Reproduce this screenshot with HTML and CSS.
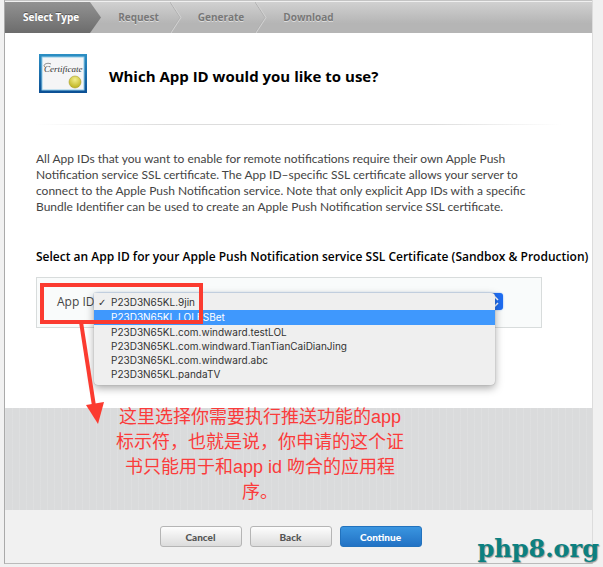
FILE: index.html
```html
<!DOCTYPE html>
<html lang="en">
<head>
<meta charset="UTF-8" />
<meta name="viewport" content="width=device-width, initial-scale=1" />
<title>Add iOS Certificate</title>
<link rel="stylesheet" href="styles.css">
</head>
<body>
<div class="panel">
  <ol class="steps">
    <li class="step active">Select Type
      <svg class="step-arrow" width="12" height="31" viewBox="0 0 12 31">
        <defs>
          <linearGradient id="activeFill" x1="0" y1="0" x2="0" y2="1">
            <stop offset="0" stop-color="#929292" />
            <stop offset="1" stop-color="#6c6c6c" />
          </linearGradient>
        </defs>
        <path d="M0 0L11 15.500L0 31Z" fill="url(#activeFill)" />
      </svg>
    </li>
    <li class="step">Request
      <svg class="step-arrow" width="12" height="31" viewBox="0 0 12 31">
        <path d="M0 0L10 15.500L0 31" fill="none" stroke="#b0b0b0" />
        <path d="M1 0L11 15.500L1 31" fill="none" stroke="#d2d2d2" />
      </svg>
    </li>
    <li class="step">Generate
      <svg class="step-arrow" width="12" height="31" viewBox="0 0 12 31">
        <path d="M0 0L10 15.500L0 31" fill="none" stroke="#b0b0b0" />
        <path d="M1 0L11 15.500L1 31" fill="none" stroke="#d2d2d2" />
      </svg>
    </li>
    <li class="step">Download</li>
  </ol>

  <form class="content">
    <div class="title">
      <svg class="certificate" width="48" height="40" viewBox="0 0 48 40">
        <defs>
          <linearGradient id="frame" x1="0" y1="0" x2="0" y2="1">
            <stop offset="0" stop-color="#2c8fc4" />
            <stop offset="1" stop-color="#0b4f94" />
          </linearGradient>
          <radialGradient id="seal" cx="0.5" cy="0.3" r="0.7">
            <stop offset="0" stop-color="#f3ee8c" />
            <stop offset="1" stop-color="#bdb21c" />
          </radialGradient>
        </defs>
        <rect x="0" y="0" width="48" height="39" fill="url(#frame)" />
        <rect x="3" y="3" width="42" height="33" fill="#f5f5f6" stroke="#8fcbe8" />
        <path d="M12 10C8 8 3 11 6 13" fill="none" stroke="#555" stroke-width="0.7" />
        <text class="certificate-text" x="5" y="18">Certificate</text>
        <circle cx="36" cy="28" r="6" fill="url(#seal)" stroke="#aaa030" stroke-width="0.6" />
      </svg>
      <h1>Which App ID would you like to use?</h1>
    </div>

    <p class="intro">
      All App IDs that you want to enable for remote notifications require their own Apple Push<br>
      Notification service SSL certificate. The App ID–specific SSL certificate allows your server to<br>
      connect to the Apple Push Notification service. Note that only explicit App IDs with a specific<br>
      Bundle Identifier can be used to create an Apple Push Notification service SSL certificate.
    </p>

    <h2>Select an App ID for your Apple Push Notification service SSL Certificate (Sandbox &amp; Production)</h2>

    <div class="field">
      <label for="appId">App ID:</label>
      <div class="dropdown">
        <select id="appId">
          <option>P23D3N65KL.9jin</option>
        </select>
        <svg class="select-cap" width="12" height="17" viewBox="0 0 12 17">
          <rect x="-4" y="0" width="16" height="17" rx="3" fill="#1f6df2" />
          <path d="M1 7L4 4L7 7M1 10L4 13L7 10" fill="none" stroke="#fff" stroke-width="1.500" />
        </svg>
        <ul class="menu" role="listbox" aria-label="App ID">
          <li role="option" aria-selected="true" class="checked">P23D3N65KL.9jin</li>
          <li role="option" class="highlighted">P23D3N65KL.LOLESBet</li>
          <li role="option">P23D3N65KL.com.windward.testLOL</li>
          <li role="option">P23D3N65KL.com.windward.TianTianCaiDianJing</li>
          <li role="option">P23D3N65KL.com.windward.abc</li>
          <li role="option">P23D3N65KL.pandaTV</li>
        </ul>
      </div>
      <svg class="marker" width="170" height="148" viewBox="0 0 170 148">
        <rect x="5" y="7" width="159" height="37" fill="none" stroke="#fb3b30" stroke-width="4" />
        <path d="M44 44L57 128" fill="none" stroke="#fb3b30" stroke-width="4" />
        <path d="M49 127L67 124L61 146Z" fill="#fb3b30" />
      </svg>
    </div>
  </form>

  <div class="linen">
    <p class="note" lang="zh-CN">这里选择你需要执行推送功能的app<br>标示符，也就是说，你申请的这个证<br>书只能用于和app id 吻合的应用程<br>序。</p>
  </div>

  <div class="buttons">
    <button type="button">Cancel</button>
    <button type="button">Back</button>
    <button type="button" class="primary">Continue</button>
  </div>
</div>
<div class="watermark">php8.org</div>
</body>
</html>
```
FILE: styles.css
```css
* {
  box-sizing: border-box;
}
body {
  margin: 0;
  background: #f1f1f1;
  font-family: "Open Sans", "Noto Sans", sans-serif;
  color: #444;
  position: relative;
}
.panel {
  margin: 0 10px 0 4px;
  background: white;
  border-left: 1px solid #aaa;
  border-right: 1px solid #dcdcdc;
  border-bottom: 1px solid #bbb;
}
.steps {
  display: flex;
  height: 33px;
  margin: 0;
  padding: 0;
  list-style: none;
  background: linear-gradient(#d2d2d2, #b5b5b5 70%, #b5b5b5);
  border-top: 1px solid #c4c4c4;
  box-shadow: inset 0 1px #f0f0f0;
}
.step {
  position: relative;
  margin-top: 1px;
  padding: 0 11px 0 28px;
  line-height: 30px;
  font-size: 10px;
  font-weight: bold;
  color: #777;
  text-shadow: 0 1px #ddd;
}
.step.active {
  padding: 0 11px 0 18px;
  background: linear-gradient(#929292, #6c6c6c);
  color: white;
  text-shadow: 0 -1px #555;
}
.step-arrow {
  position: absolute;
  left: 100%;
  top: 0;
}
.content {
  position: relative;
  z-index: 1;
  height: 375px;
  padding: 0 0 0 31px;
}
.title {
  display: flex;
  align-items: center;
  gap: 22px;
  height: 92px;
  margin-right: 30px;
  padding: 0 0 10px 3px;
  border-bottom: 1px solid;
  border-image: linear-gradient(to right, transparent, #ddd 25%, #ddd 75%, transparent) 1;
}
.certificate-text {
  font-family: "Liberation Serif", serif;
  font-style: italic;
  font-size: 9px;
  fill: #333;
}
h1 {
  margin: 5px 0 0;
  font-size: 15px;
  line-height: 20px;
  color: black;
}
.intro {
  margin: 26px 0 34px;
  font-family: Lato, sans-serif;
  font-size: 12px;
  line-height: 16px;
  white-space: nowrap;
}
h2 {
  margin: 0;
  font-size: 12px;
  font-weight: 600;
  line-height: 16px;
  color: black;
  white-space: nowrap;
}
.field {
  position: relative;
  display: flex;
  width: 506px;
  max-width: 100%;
  height: 51px;
  margin-top: 12px;
  padding: 15px 38px 0 20px;
  border: 1px solid #d8dcdc;
  background: #f9fbfb;
}
.field label {
  width: 37px;
  font-size: 12px;
  line-height: 18px;
  white-space: nowrap;
}
.dropdown {
  position: relative;
  flex: 1;
}
.dropdown select {
  display: block;
  width: 100%;
  height: 17px;
  border: 1px solid #a9c4ea;
  border-radius: 4px;
  background: white;
  appearance: none;
  font-size: 11px;
  box-shadow: 0 0 2px #7fb0f5;
}
.select-cap {
  position: absolute;
  right: 0;
  top: 0;
}
.menu {
  position: absolute;
  left: 0;
  right: 8px;
  top: 0;
  margin: 0;
  padding: 2px 0 4px;
  list-style: none;
  background: #efefef;
  border-radius: 0 4px 4px 4px;
  box-shadow: 0 0 1px #888, 0 3px 8px rgba(0, 0, 0, 0.35);
  font-family: Inter, sans-serif;
  font-size: 10px;
  line-height: 14px;
  color: #333;
}
.menu li {
  padding-left: 17px;
}
.menu .checked {
  position: relative;
  line-height: 15px;
}
.menu .checked::before {
  content: "✓";
  position: absolute;
  left: 4px;
  font-family: "DejaVu Sans", sans-serif;
  font-weight: bold;
}
.menu .highlighted {
  line-height: 15px;
  background: #3f98fd;
  color: white;
}
.marker {
  position: absolute;
  left: 0;
  top: 0;
}
.linen {
  position: relative;
  height: 102px;
  background:
    repeating-linear-gradient(to right, rgba(255, 255, 255, 0.1) 0 1px, transparent 1px 7px),
    #dadbdc;
}
.note {
  position: absolute;
  z-index: 2;
  left: 94px;
  top: -3px;
  width: 322px;
  margin: 0;
  text-align: center;
  font-family: "Liberation Sans", "Noto Sans CJK SC", sans-serif;
  font-size: 18px;
  line-height: 25px;
  color: #fb3b3b;
}
.buttons {
  display: flex;
  justify-content: center;
  gap: 8px;
  padding: 16px 16px 16px 0;
  background: #f1f1f1;
}
.buttons button {
  width: 82px;
  height: 21px;
  padding: 0;
  border: 1px solid #b5b5b5;
  border-radius: 3px;
  background: linear-gradient(#fdfdfd, #dcdcdc);
  font-family: Lato, sans-serif;
  font-size: 10px;
  font-weight: 900;
  color: #555;
}
.buttons .primary {
  border-color: #2272bd;
  background: linear-gradient(#3a95e0, #2272c4);
  color: white;
}
.watermark {
  position: absolute;
  right: 4px;
  bottom: 0;
  font-family: "DejaVu Serif", serif;
  font-size: 24px;
  font-weight: bold;
  line-height: 30px;
  color: #0c8080;
  text-shadow: 1px 1px 1px #999;
}
```
